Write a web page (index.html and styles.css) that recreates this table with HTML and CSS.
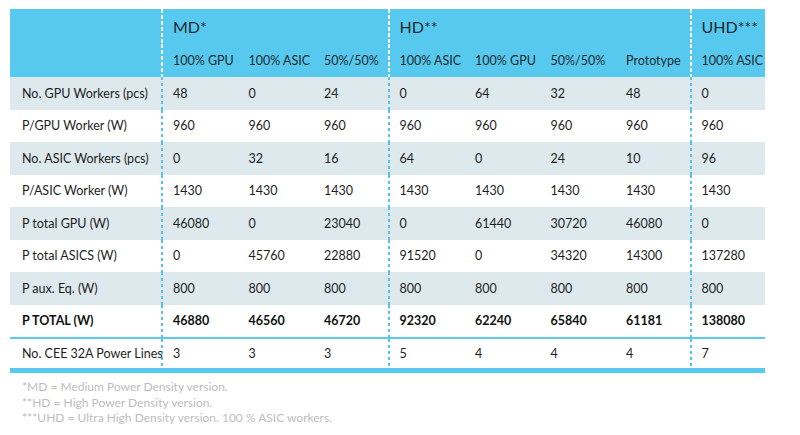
FILE: index.html
```html
<!DOCTYPE html>
<html>
<head>
<meta charset="utf-8">
<link rel="stylesheet" href="styles.css">
</head>
<body>
<div class="wrap">
<table class="spec">
  <colgroup>
    <col class="c-label">
    <col class="c-data"><col class="c-data"><col class="c-data">
    <col class="c-data"><col class="c-data"><col class="c-data"><col class="c-data">
    <col class="c-data">
  </colgroup>
  <thead>
    <tr class="groups">
      <th class="blank"></th>
      <th class="grp div" colspan="3">MD*</th>
      <th class="grp div" colspan="4">HD**</th>
      <th class="grp div">UHD***</th>
    </tr>
    <tr class="subs">
      <th class="blank"></th>
      <th class="div">100% GPU</th>
      <th>100% ASIC</th>
      <th>50%/50%</th>
      <th class="div">100% ASIC</th>
      <th>100% GPU</th>
      <th>50%/50%</th>
      <th>Prototype</th>
      <th class="div">100% ASIC</th>
    </tr>
  </thead>
  <tbody>
    <tr class="shade">
      <td class="lbl">No. GPU Workers (pcs)</td>
      <td class="div">48</td><td>0</td><td>24</td>
      <td class="div">0</td><td>64</td><td>32</td><td>48</td>
      <td class="div">0</td>
    </tr>
    <tr>
      <td class="lbl">P/GPU Worker (W)</td>
      <td class="div">960</td><td>960</td><td>960</td>
      <td class="div">960</td><td>960</td><td>960</td><td>960</td>
      <td class="div">960</td>
    </tr>
    <tr class="shade">
      <td class="lbl">No. ASIC Workers (pcs)</td>
      <td class="div">0</td><td>32</td><td>16</td>
      <td class="div">64</td><td>0</td><td>24</td><td>10</td>
      <td class="div">96</td>
    </tr>
    <tr>
      <td class="lbl">P/ASIC Worker (W)</td>
      <td class="div">1430</td><td>1430</td><td>1430</td>
      <td class="div">1430</td><td>1430</td><td>1430</td><td>1430</td>
      <td class="div">1430</td>
    </tr>
    <tr class="shade">
      <td class="lbl">P total GPU (W)</td>
      <td class="div">46080</td><td>0</td><td>23040</td>
      <td class="div">0</td><td>61440</td><td>30720</td><td>46080</td>
      <td class="div">0</td>
    </tr>
    <tr>
      <td class="lbl">P total ASICS (W)</td>
      <td class="div">0</td><td>45760</td><td>22880</td>
      <td class="div">91520</td><td>0</td><td>34320</td><td>14300</td>
      <td class="div">137280</td>
    </tr>
    <tr class="shade">
      <td class="lbl">P aux. Eq. (W)</td>
      <td class="div">800</td><td>800</td><td>800</td>
      <td class="div">800</td><td>800</td><td>800</td><td>800</td>
      <td class="div">800</td>
    </tr>
    <tr class="total">
      <td class="lbl">P TOTAL (W)</td>
      <td class="div">46880</td><td>46560</td><td>46720</td>
      <td class="div">92320</td><td>62240</td><td>65840</td><td>61181</td>
      <td class="div">138080</td>
    </tr>
    <tr class="last">
      <td class="lbl">No. CEE 32A Power Lines</td>
      <td class="div">3</td><td>3</td><td>3</td>
      <td class="div">5</td><td>4</td><td>4</td><td>4</td>
      <td class="div">7</td>
    </tr>
  </tbody>
</table>
<div class="notes">
  <p>*MD = Medium Power Density version.</p>
  <p>**HD = High Power Density version.</p>
  <p>***UHD = Ultra High Density version. 100 % ASIC workers.</p>
</div>
</div>
</body>
</html>
```
FILE: styles.css
```css
html, body {
  margin: 0;
  padding: 0;
  background: #ffffff;
}
body {
  font-family: Lato, "Open Sans", sans-serif;
  color: #222222;
}
.wrap {
  padding: 9px 0 0 10px;
}
.spec {
  width: 755px;
  table-layout: fixed;
  border-collapse: collapse;
  border-spacing: 0;
}
.c-label { width: 151px; }
.c-data { width: 75.5px; }

.spec th,
.spec td {
  padding: 0 0 0 12px;
  text-align: left;
  vertical-align: middle;
  white-space: nowrap;
  overflow: visible;
}
.spec thead th {
  background-color: #58c9ee;
  font-weight: 400;
  color: #1c2a30;
}
.groups th {
  height: 35px;
  font-size: 16px;
}
.subs th {
  height: 33px;
  font-size: 12.5px;
}
.spec tbody td {
  height: 32.5px;
  font-size: 12.5px;
  color: #1e1e1e;
}
.spec tbody tr.shade td {
  background-color: #dde9ed;
}
.spec tbody tr.total td {
  font-weight: 700;
  color: #111111;
}
.spec tbody tr.last td {
  height: 29px;
  border-top: 2px solid #5ccaef;
  border-bottom: 5px solid #58c9ee;
}

/* dashed group dividers */
.spec thead th.div {
  background-image: repeating-linear-gradient(to bottom, #ffffff 0, #ffffff 4px, transparent 4px, transparent 6px);
  background-size: 2px 100%;
  background-repeat: no-repeat;
  background-position: left top;
}
.spec tbody td.div {
  background-image: repeating-linear-gradient(to bottom, #55c4ec 0, #55c4ec 3px, transparent 3px, transparent 6px);
  background-size: 2px 100%;
  background-repeat: no-repeat;
  background-position: left top;
}

.notes {
  padding: 6px 0 0 12px;
  color: #bdbdbd;
  font-size: 12px;
}
.notes p {
  margin: 0;
  line-height: 15.5px;
}
```
